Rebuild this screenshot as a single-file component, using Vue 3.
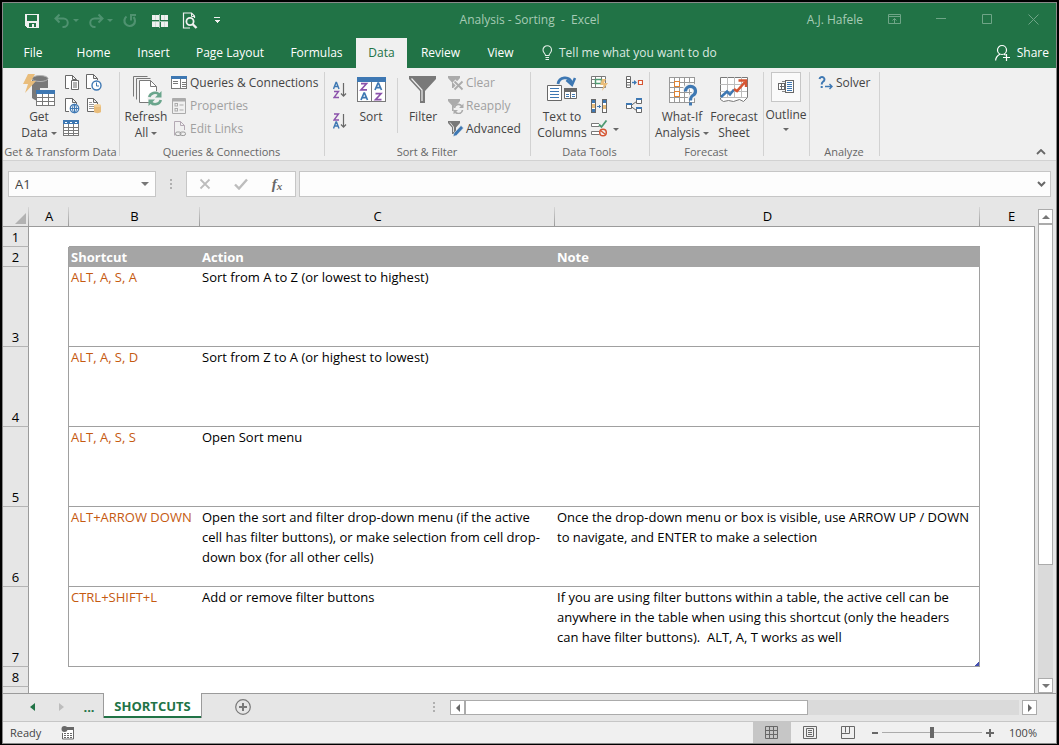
<script setup>
import { ref } from 'vue'

const tabs = [
  { label: 'File', cls: 'w60' },
  { label: 'Home', cls: 'w61' },
  { label: 'Insert', cls: 'w59' },
  { label: 'Page Layout', cls: 'w94' },
  { label: 'Formulas', cls: 'w79' },
  { label: 'Data', cls: 'w51' },
  { label: 'Review', cls: 'w67' },
  { label: 'View', cls: 'w53' },
]
const activeTab = ref('Data')
const cellName = ref('A1')
const formula = ref('')
const zoom = ref(50)

const rows = [
  { n: 3, keys: 'ALT, A, S, A', action: 'Sort from A to Z (or lowest to highest)', note: '' },
  { n: 4, keys: 'ALT, A, S, D', action: 'Sort from Z to A (or highest to lowest)', note: '' },
  { n: 5, keys: 'ALT, A, S, S', action: 'Open Sort menu', note: '' },
  {
    n: 6,
    keys: 'ALT+ARROW DOWN',
    action: 'Open the sort and filter drop-down menu (if the active\ncell has filter buttons), or make selection from cell drop-\ndown box (for all other cells)',
    note: 'Once the drop-down menu or box is visible, use ARROW UP / DOWN\nto navigate, and ENTER to make a selection',
  },
  {
    n: 7,
    keys: 'CTRL+SHIFT+L',
    action: 'Add or remove filter buttons',
    note: 'If you are using filter buttons within a table, the active cell can be\nanywhere in the table when using this shortcut (only the headers\ncan have filter buttons).  ALT, A, T works as well',
  },
]
</script>

<template>
  <div class="frame">
    <div class="window">
      <header class="top">
        <div class="titlebar">
          <div class="quick">
            <button aria-label="Save" class="q-save">
              <svg width="16" height="16" viewBox="0 0 16 16" shape-rendering="crispEdges"><path d="M1 1h14v14H3l-2-2z" fill="#f0f0f0" /><path d="M3 2h10v6H3zM5 10h7v4h-2v-3H8v3H5z" fill="#217346" /></svg>
            </button>
            <button aria-label="Undo" class="q-undo dim">
              <svg width="16" height="16" viewBox="0 0 16 16"><path d="M5.500 1.500L1.500 5.500l4 4M2 5.500h7.500a4 4 0 0 1 0 8.500H8.500" fill="none" stroke="currentColor" stroke-width="2" /></svg>
            </button>
            <button aria-label="Undo list" class="q-caret dim"><svg width="7" height="4"><path d="M0 0h6L3 3z" fill="currentColor" /></svg></button>
            <button aria-label="Redo" class="q-redo dim">
              <svg width="16" height="16" viewBox="0 0 16 16"><path d="M10.500 1.500l4 4-4 4M14 5.500H6.500a4 4 0 0 0 0 8.500H7.500" fill="none" stroke="currentColor" stroke-width="2" /></svg>
            </button>
            <button aria-label="Redo list" class="q-caret dim"><svg width="7" height="4"><path d="M0 0h6L3 3z" fill="currentColor" /></svg></button>
            <button aria-label="Repeat" class="q-repeat dim">
              <svg width="16" height="16" viewBox="0 0 16 16"><path d="M4.500 3.500A5.300 5.300 0 1 0 11.500 4" fill="none" stroke="currentColor" stroke-width="2.200" /><path d="M14 2H9v5.500" fill="none" stroke="currentColor" stroke-width="2" /></svg>
            </button>
            <button aria-label="Freeze panes" class="q-freeze">
              <svg width="16" height="14" viewBox="0 0 16 14" shape-rendering="crispEdges"><path d="M0 1h7v5H0zM9 1h7v5H9zM0 8h7v5H0zM9 8h7v5H9z" fill="#f0f0f0" /><path d="M7.500 0v14M0 7h16" stroke="#9fc4af" /><path d="M3 1v5M12 1v5M3 8v5M12 8v5" stroke="#cfe0d6" /></svg>
            </button>
            <button aria-label="Print preview" class="q-preview">
              <svg width="16" height="17" viewBox="0 0 16 17"><path d="M12.500 6V4l-3-3H1.500v15H8" fill="none" stroke="#f0f0f0" stroke-width="1.200" /><path d="M9.500 1v3.500H13" fill="none" stroke="#f0f0f0" /><circle cx="8" cy="9.500" r="3.600" fill="none" stroke="#f0f0f0" stroke-width="1.800" /><path d="M10.500 12l4 4" stroke="#f0f0f0" stroke-width="2.400" /></svg>
            </button>
            <button aria-label="Customize toolbar" class="q-more"><svg width="6" height="7" shape-rendering="crispEdges"><path d="M0 0h6v1H0zM0 3h6L3 6z" fill="#f0f0f0" /></svg></button>
          </div>
          <h1 class="title">Analysis - Sorting&nbsp; -&nbsp; Excel</h1>
          <div class="account">
            <span class="user">A.J. Hafele</span>
            <button aria-label="Ribbon display options" class="win"><svg width="14" height="11"><path d="M.5.500h12v9H.5zM.5 2.500h12M6.500 9V4.500M4.500 6.500l2-2 2 2" fill="none" stroke="currentColor" /></svg></button>
            <button aria-label="Minimize" class="win"><svg width="11" height="11"><path d="M0 4.500h10" stroke="currentColor" /></svg></button>
            <button aria-label="Maximize" class="win"><svg width="11" height="11"><path d="M.5.500h9v9h-9z" fill="none" stroke="currentColor" /></svg></button>
            <button aria-label="Close" class="win"><svg width="11" height="11"><path d="M.5.500l10 10M10.500.500l-10 10" stroke="currentColor" /></svg></button>
          </div>
        </div>
        <nav class="tabs">
          <button v-for="t in tabs" :key="t.label" :class="['tab', t.cls, { active: activeTab === t.label }]" @click="activeTab = t.label">{{ t.label }}</button>
          <button class="tell">
            <svg width="11" height="16" viewBox="0 0 11 16"><path d="M3.500 10.500C3.500 8.500 1 7.800 1 5a4.200 4.200 0 0 1 8.500 0c0 2.800-2.500 3.500-2.500 5.500zM3.500 12.500h3.500M3.500 14.500h3.500" fill="none" stroke="#e4efe8" stroke-width="1.100" /></svg>
            Tell me what you want to do
          </button>
          <button class="share">
            <svg width="16" height="18" viewBox="0 0 16 18"><circle cx="7" cy="6" r="4.500" fill="none" stroke="#fff" stroke-width="1.200" /><path d="M.600 16.500c.2-3.500 2-5 4.400-6.200M9 10l1.500 1.200M8 13.500h7M11.500 10v7" fill="none" stroke="#fff" stroke-width="1.200" /></svg>
            Share
          </button>
        </nav>
      </header>

      <section class="ribbon">
        <div class="group g-get">
          <div class="body">
            <button class="big b-get">
              <svg width="32" height="32" viewBox="0 0 32 32"><path d="M9 4v20c2 2 5 3 8 3V14h8V4z" fill="#797979" /><ellipse cx="17" cy="4.500" rx="8" ry="3" fill="#797979" stroke="#b5b5b5" /><path d="M5 0h7L8 7h5L2 19l3-9H0z" fill="#e9bd7b" /><g shape-rendering="crispEdges"><path d="M13 16h19v16H13z" fill="#f0f0f0" /><path d="M13.500 17h18v14h-18zM13 23.500h19M13 27.500h19M19.500 20v12M25.500 20v12" fill="#fff" stroke="#797979" /><path d="M13 16h19v4H13z" fill="#3e78b3" /></g></svg>
              <span>Get</span><span>Data <i class="caret"></i></span>
            </button>
            <div class="small-grid">
              <button aria-label="From text or CSV"><svg width="18" height="18" viewBox="0 0 18 18"><path d="M6 14.500H2.500v-13h7l4 4V6M9.500 1.500v4h4" fill="#fff" stroke="#686868" /><path d="M8.500 6.500h7v9h-7zM10 9h4M10 11h4M10 13h4" fill="#fff" stroke="#686868" /></svg></button>
              <button aria-label="Recent sources"><svg width="18" height="18" viewBox="0 0 18 18"><path d="M6 14.500H1.500V.500h7l4 4V6M8.500.500v4h4" fill="#fff" stroke="#686868" /><circle cx="11.500" cy="11.500" r="4.500" fill="#fff" stroke="#3e78b3" stroke-width="1.400" /><path d="M11.500 8.500v3.500H14" fill="none" stroke="#3e78b3" /></svg></button>
              <button aria-label="From web"><svg width="18" height="18" viewBox="0 0 18 18"><path d="M6 14.500H2.500v-13h7l4 4V7M9.500 1.500v4h4" fill="#fff" stroke="#686868" /><circle cx="11.500" cy="11.500" r="4.200" fill="#fff" stroke="#3e78b3" stroke-width="1.300" /><path d="M7 11.500h9M11.500 7v9" stroke="#3e78b3" /><ellipse cx="11.500" cy="11.500" rx="2" ry="4.200" fill="none" stroke="#3e78b3" /></svg></button>
              <button aria-label="Existing connections"><svg width="18" height="18" viewBox="0 0 18 18"><path d="M9 14.500H2.500v-13h6l4 4V7M8.500 1.500v4h4" fill="#fff" stroke="#686868" /><path d="M4 5.500h3M4 7.500h5M4 9.500h5M4 11.500h5" stroke="#999" /><path d="M9 8.500v6.500c1.500 1.500 5.500 1.500 7 0V8.500z" fill="#e9bd7b" /><ellipse cx="12.500" cy="8.500" rx="3.500" ry="1.500" fill="#f1cf98" /></svg></button>
              <button aria-label="From table or range"><svg width="18" height="18" viewBox="0 0 18 18" shape-rendering="crispEdges"><path d="M.5 1.500h15v14H.5zM0 7.500h16M0 10.500h16M0 13.500h16M5.500 4v12M10.500 4v12" fill="#fff" stroke="#797979" /><path d="M0 0h16v4H0z" fill="#3e78b3" /><path d="M2 2h2M7 2h2M12 2h2" stroke="#fff" /></svg></button>
            </div>
          </div>
          <h2>Get &amp; Transform Data</h2>
        </div>

        <div class="group g-queries">
          <div class="body">
            <button class="big b-refresh">
              <svg width="32" height="32" viewBox="0 0 32 32"><path d="M3.500 22.500V2.500h14" fill="none" stroke="#797979" /><path d="M6.500 25.500V4.500h14" fill="none" stroke="#797979" /><path d="M9.500 28.500v-22h11l6 6v16z" fill="#fff" stroke="#797979" /><path d="M20.500 6.500v6h6" fill="none" stroke="#797979" /><circle cx="25" cy="24.500" r="7.500" fill="#f0f0f0" /><path d="M19.200 23a6 6 0 0 1 10-2.500M30.800 26a6 6 0 0 1-10 2.500" fill="none" stroke="#6aa58c" stroke-width="2.600" /><path d="M31.500 17v6.500H25zM18.500 32v-6.500H25z" fill="#6aa58c" /></svg>
              <span>Refresh</span><span>All <i class="caret"></i></span>
            </button>
            <div class="list">
              <button><svg width="16" height="16" viewBox="0 0 16 16" shape-rendering="crispEdges"><path d="M.5 1.500h15v12H.5z" fill="#fff" stroke="#797979" /><path d="M0 1h16v3H0z" fill="#3e78b3" /><path d="M2 6.500h5M2 8.500h5M9.500 4v10M11 7.500h4M11 9.500h4M11 11.500h4" stroke="#797979" /></svg>Queries &amp; Connections</button>
              <button disabled><svg width="16" height="16" viewBox="0 0 16 16"><path d="M1.500.500h13v15h-13zM1.500 3h13" fill="none" stroke="#ababab" /><path d="M2 2h12" stroke="#ababab" stroke-width="2" /><rect x="4" y="5.500" width="2.500" height="2.500" fill="none" stroke="#ababab" /><rect x="4" y="10.500" width="2.500" height="2.500" fill="none" stroke="#ababab" /><path d="M8.500 7h4M8.500 12h4" stroke="#ababab" /></svg>Properties</button>
              <button disabled><svg width="16" height="16" viewBox="0 0 16 16"><path d="M4 14.500v-.500H3.500V.500h6l4 4V9M9.500.500v4h4" fill="none" stroke="#b4a9b4" /><rect x="4.500" y="11" width="5.500" height="3.500" rx="1.700" fill="none" stroke="#999" /><rect x="9" y="11" width="5.500" height="3.500" rx="1.700" fill="none" stroke="#999" /></svg>Edit Links</button>
            </div>
          </div>
          <h2>Queries &amp; Connections</h2>
        </div>

        <div class="group g-sort">
          <div class="body">
            <div class="az-col">
              <button aria-label="Sort A to Z"><svg width="14" height="18" viewBox="0 0 14 18"><path d="M.5 8L3 1.500h.500L6 8M1.500 5.500h3.500" fill="none" stroke="#3e78b3" stroke-width="1.400" /><path d="M1 10.500h4.500L1 16.500h5" fill="none" stroke="#8b52ab" stroke-width="1.400" /><path d="M10.500 2v13M8 12.500l2.500 2.700L13 12.500" fill="none" stroke="#686868" stroke-width="1.200" /></svg></button>
              <button aria-label="Sort Z to A"><svg width="14" height="18" viewBox="0 0 14 18"><path d="M1 2h4.500L1 8h5" fill="none" stroke="#8b52ab" stroke-width="1.400" /><path d="M.5 16.500L3 10h.500L6 16.500M1.500 14h3.500" fill="none" stroke="#3e78b3" stroke-width="1.400" /><path d="M10.500 2v13M8 12.500l2.500 2.700L13 12.500" fill="none" stroke="#686868" stroke-width="1.200" /></svg></button>
            </div>
            <button class="big b-sort">
              <svg width="32" height="32" viewBox="0 0 32 32"><g shape-rendering="crispEdges"><path d="M2.500 3.500h28v24h-28z" fill="#fff" stroke="#797979" /><path d="M2 3h29v5H2z" fill="#3e78b3" /><path d="M16.500 8v20" stroke="#797979" /></g><path d="M6 9.700h5.500L6 15.800h6M20.500 19.700H26l-5.500 6h6" fill="none" stroke="#8b52ab" stroke-width="1.700" /><path d="M6 26l3-7h.500l3 7M7 23.700h4.500M20 16l3-7h.500l3 7M21 13.700h4.500" fill="none" stroke="#3e78b3" stroke-width="1.700" /></svg>
              <span>Sort</span>
            </button>
            <i class="divider"></i>
            <button class="big b-filter">
              <svg width="32" height="32" viewBox="0 0 32 32"><path d="M2 2h27v3L18 17v12h-5V17L2 5z" fill="#797979" /><path d="M4.500 4.500L15 16v11" fill="none" stroke="#eee" stroke-width="1.200" /></svg>
              <span>Filter</span>
            </button>
            <div class="list l-filter">
              <button disabled><svg width="16" height="16" viewBox="0 0 16 16"><path d="M0 1h12v2L8 7.500V13H4V7.500L0 3z" fill="#ababab" /><path d="M6 6l9 9M15 6l-9 9" stroke="#f0f0f0" stroke-width="4" /><path d="M6.500 6.500l8 8M14.500 6.500l-8 8" stroke="#ababab" stroke-width="1.800" /></svg>Clear</button>
              <button disabled><svg width="16" height="16" viewBox="0 0 16 16"><path d="M0 1h12v2L8 7.500V13H4V7.500L0 3z" fill="#ababab" /><circle cx="10.500" cy="11" r="5" fill="#f0f0f0" /><path d="M6.500 10a4 4 0 0 1 7.500-1.500M14.500 12a4 4 0 0 1-7.500 1.500" fill="none" stroke="#ababab" stroke-width="1.600" /><path d="M15.500 5.500v4.500H11zM5.500 16.500V12H10z" fill="#ababab" /></svg>Reapply</button>
              <button><svg width="16" height="16" viewBox="0 0 16 16"><path d="M0 0h12v2L8 6.500V13H4V6.500L0 2z" fill="#797979" /><path d="M2 1.500l3.500 4.500v5" fill="none" stroke="#ddd" /><path d="M5 15.500l1-3.500 7-7.500 2.500 2.500-7 7.500z" fill="#3e78b3" stroke="#f0f0f0" stroke-width=".6" /></svg>Advanced</button>
            </div>
          </div>
          <h2>Sort &amp; Filter</h2>
        </div>

        <div class="group g-tools">
          <div class="body">
            <button class="big b-text">
              <svg width="32" height="32" viewBox="0 0 32 32"><path d="M12 10c1-7 11-9 14-1" fill="none" stroke="#3e78b3" stroke-width="2.800" /><path d="M20.500 6l5.500 5 3-7" fill="none" stroke="#3e78b3" stroke-width="2.500" /><path d="M1.500 11.500h14v15h-14z" fill="#fff" stroke="#686868" /><path d="M4 14.500h9M4 17.500h9M4 20.500h9M4 23.500h9" stroke="#3e78b3" shape-rendering="crispEdges" /><path d="M18.500 15.500h12v9h-12zM24.500 18v7" fill="#fff" stroke="#686868" /><path d="M18 14h13v4H18z" fill="#686868" /><path d="M20 20.500h3M20 22.500h3M26 20.500h3M26 22.500h3" stroke="#3e78b3" /></svg>
              <span>Text to</span><span>Columns</span>
            </button>
            <div class="tool-grid">
              <button aria-label="Flash Fill"><svg width="17" height="18" viewBox="0 0 17 18"><path d="M.5 2.500h14v11H.5zM0 5.500h15M0 9.500h10M4.500 2v11M10.500 2v4" fill="#fff" stroke="#797979" /><path d="M4.500 5.500h6v4h-6z" fill="#fff" stroke="#4f9a72" stroke-width="1.500" /><path d="M11 5h4l-2 4h4l-6 8 1.500-6H9z" fill="#e9bd7b" /></svg></button>
              <button aria-label="Consolidate"><svg width="17" height="18" viewBox="0 0 17 18"><path d="M.5 2.500h4v11h-4zM.5 5.500h4M.5 8.500h4M.5 11h4" fill="#fff" stroke="#686868" /><path d="M6 8.500h4" stroke="#3e78b3" stroke-width="1.400" /><path d="M8 6l3 2.500L8 11z" fill="#3e78b3" /><path d="M12.500 6.500h4v4h-4z" fill="#fff" stroke="#d65532" stroke-width="1.200" /></svg></button>
              <button aria-label="Remove Duplicates"><svg width="17" height="18" viewBox="0 0 17 18" shape-rendering="crispEdges"><path d="M.5 2.500h4v13h-4zM11.500 2.500h4v13h-4z" fill="#fff" stroke="#686868" /><path d="M1 3h3v3H1zM12 3h3v3h-3z" fill="#3e78b3" /><path d="M1 7h3v4H1zM12 8h3v4h-3z" fill="#e9bd7b" /><path d="M1 12h3v3H1z" fill="#3e78b3" /><path d="M6 9h4M8.500 7.500v3" stroke="#3e78b3" /></svg></button>
              <button aria-label="Relationships"><svg width="17" height="18" viewBox="0 0 17 18"><path d="M5 8.500l5.500-4M5 9.500l5.500 4" stroke="#686868" /><path d="M.5 6.500h5v5h-5zM10.500 1.500h5v5h-5zM10.500 10.500h5v5h-5z" fill="#fff" stroke="#686868" /><path d="M0 6h6v2H0zM10 1h6v2h-6zM10 10h6v2h-6z" fill="#3e78b3" /></svg></button>
              <button aria-label="Data Validation"><svg width="17" height="18" viewBox="0 0 17 18"><path d="M8 3.500H.5v3h8M8 11.500H.5v3h8" fill="#fff" stroke="#797979" /><path d="M8 4.500l2.500 2.500 5-6.500" fill="none" stroke="#4f9a72" stroke-width="1.800" /><circle cx="12" cy="12.500" r="3.300" fill="#f0f0f0" stroke="#d65532" stroke-width="1.500" /><path d="M9.500 10.500l5 4" stroke="#d65532" stroke-width="1.300" /></svg></button>
              <button aria-label="Data Validation options" class="val-caret"><i class="caret"></i></button>
            </div>
          </div>
          <h2>Data Tools</h2>
        </div>

        <div class="group g-forecast">
          <div class="body">
            <button class="big b-what">
              <svg width="32" height="32" viewBox="0 0 32 32"><g shape-rendering="crispEdges"><path d="M3.500 3.500h25v25h-25z" fill="#fff" /><path d="M3.500 3.500h25v25h-25zM8.500 3v26M13.500 3v26M18.500 3v26M23.500 3v26M3 8.500h26M3 13.500h26M3 18.500h26M3 23.500h26" fill="none" stroke="#999" /><path d="M8.500 7.500h5v5h-5zM8.500 17.500h5v5h-5z" fill="#fff" stroke="#df8334" /></g><path d="M19.500 17a5 5 0 1 1 8 4c-2 1.300-3 2-3 5" fill="none" stroke="#f0f0f0" stroke-width="6" /><path d="M19.500 17.500a5 4.800 0 1 1 8 3.500c-2 1.300-3 2-3 5.500" fill="none" stroke="#3e78b3" stroke-width="3.200" /><path d="M23 28.500h3v3h-3z" fill="#3e78b3" /></svg>
              <span>What-If</span><span>Analysis <i class="caret"></i></span>
            </button>
            <button class="big b-fore">
              <svg width="32" height="32" viewBox="0 0 32 32"><path d="M2.500 3.500h27v20l-4 4-4-2-6 2-5-1-5 1-3-2z" fill="#fff" stroke="#797979" /><path d="M9.500 3v21M16.500 3v21M23.500 3v21M2 10.500h27M2 17.500h27M2 23.500h27" stroke="#bcbcbc" /><path d="M3 23l6-5.500 3 3 4-5" fill="none" stroke="#3e78b3" stroke-width="2.500" /><path d="M16 15l3 2 8-9" fill="none" stroke="#d65532" stroke-width="2.500" /><path d="M20.500 6.500H28V13" fill="none" stroke="#d65532" stroke-width="2.400" /></svg>
              <span>Forecast</span><span>Sheet</span>
            </button>
          </div>
          <h2>Forecast</h2>
        </div>

        <div class="group g-outline">
          <button class="outline">
            <b><svg width="18" height="16" viewBox="0 0 18 16" shape-rendering="crispEdges"><path d="M8.500 1.500h8v12h-8zM1.500 4.500h6v6h-6zM4.500 5v5M3 7.500h4" fill="#fff" stroke="#686868" /><path d="M10 3.500h5M10 5.500h5M10 7.500h5M10 9.500h5M10 11.500h5" stroke="#3e78b3" /><path d="M4.500 2.500H8M4.500 12.500H8" stroke="#888" /></svg></b>
            <span>Outline</span>
            <i class="caret"></i>
          </button>
        </div>

        <div class="group g-analyze">
          <div class="body">
            <div class="list l-solver">
              <button><svg width="16" height="16" viewBox="0 0 16 16"><path d="M1.500 4a2.500 2.500 0 1 1 3.500 2.700C4 7.500 3.700 8 3.700 9.500M3.700 11v2" fill="none" stroke="#3e78b3" stroke-width="2" /><path d="M7 11.500h7M11.500 9l2.500 2.500-2.500 2.500" fill="none" stroke="#3e78b3" stroke-width="1.400" /></svg>Solver</button>
            </div>
          </div>
          <h2>Analyze</h2>
        </div>
        <button aria-label="Collapse the ribbon" class="collapse"><svg width="10" height="6"><path d="M1 5l4-4 4 4" fill="none" stroke="#686868" stroke-width="1.800" /></svg></button>
      </section>

      <section class="formula-row">
        <div class="name-box">
          <input v-model="cellName" aria-label="Name box" />
          <button aria-label="Name list"><svg width="8" height="5"><path d="M0 0h8L4 4z" fill="#777" /></svg></button>
        </div>
        <i class="dots"></i>
        <div class="fx">
          <button aria-label="Cancel"><svg width="12" height="12"><path d="M1.500 1.500l9 9M10.500 1.500l-9 9" stroke="#bdbdbd" stroke-width="1.800" /></svg></button>
          <button aria-label="Enter"><svg width="14" height="12"><path d="M1 6.500l4 4 8-9" fill="none" stroke="#bdbdbd" stroke-width="2.400" /></svg></button>
          <button aria-label="Insert function" class="fx-label">f<small>x</small></button>
        </div>
        <div class="formula">
          <input v-model="formula" aria-label="Formula bar" />
          <button aria-label="Expand formula bar"><svg width="10" height="6"><path d="M1 1l3.500 3.500L8 1" fill="none" stroke="#686868" stroke-width="2" /></svg></button>
        </div>
      </section>

      <main class="workspace">
        <div class="sheet">
          <table>
            <colgroup><col class="c-head" /><col class="c-a" /><col class="c-b" /><col class="c-c" /><col class="c-d" /><col /></colgroup>
            <thead>
              <tr>
                <th class="corner" aria-label="Select all"><svg width="11" height="11"><path d="M11 0v11H0z" fill="#b2b2b2" /></svg></th>
                <th>A</th><th>B</th><th>C</th><th>D</th><th class="last">E</th>
              </tr>
            </thead>
            <tbody>
              <tr class="r20"><th>1</th><td></td><td class="line"></td><td class="line"></td><td class="line"></td><td class="end"></td></tr>
              <tr class="r20 head"><th>2</th><td class="edge"></td><td class="fill">Shortcut</td><td class="fill">Action</td><td class="fill">Note</td><td class="end"></td></tr>
              <tr v-for="r in rows" :key="r.n" class="r80">
                <th>{{ r.n }}</th>
                <td class="edge"></td>
                <td class="line keys">{{ r.keys }}</td>
                <td class="line">{{ r.action }}</td>
                <td class="line side">{{ r.note }}<i v-if="r.n === 7" class="handle"></i></td>
                <td class="end"></td>
              </tr>
              <tr class="r20"><th>8</th><td></td><td></td><td></td><td></td><td class="end"></td></tr>
              <tr class="rest"><th></th><td></td><td></td><td></td><td></td><td class="end"></td></tr>
            </tbody>
          </table>
        </div>
        <div class="vscroll">
          <button aria-label="Scroll up"><svg width="8" height="4"><path d="M0 4h8L4 0z" fill="#777" /></svg></button>
          <div class="vtrack"><div class="vthumb"></div></div>
          <button aria-label="Scroll down"><svg width="8" height="4"><path d="M0 0h8L4 4z" fill="#777" /></svg></button>
        </div>
      </main>

      <section class="sheetbar">
        <button aria-label="Previous sheet" class="nav1"><svg width="5" height="8"><path d="M5 0v8L0 4z" fill="#217346" /></svg></button>
        <button aria-label="Next sheet" class="nav2"><svg width="5" height="8"><path d="M0 0v8l5-4z" fill="#bdbdbd" /></svg></button>
        <button aria-label="More sheets" class="more">...</button>
        <button class="sheet-tab">SHORTCUTS</button>
        <button aria-label="New sheet" class="add"><svg width="16" height="16"><circle cx="8" cy="8" r="7.300" fill="none" stroke="#797979" stroke-width="1.200" /><path d="M4 8h8M8 4v8" stroke="#797979" stroke-width="2" /></svg></button>
        <i class="dots"></i>
        <div class="hscroll">
          <button aria-label="Scroll left"><svg width="4" height="8"><path d="M4 0v8L0 4z" fill="#686868" /></svg></button>
          <div class="htrack"><div class="hthumb"></div></div>
          <button aria-label="Scroll right" class="right"><svg width="4" height="8"><path d="M0 0v8l4-4z" fill="#686868" /></svg></button>
        </div>
      </section>

      <footer class="status">
        <span class="ready">Ready</span>
        <button aria-label="Record macro" class="macro"><svg width="14" height="14" viewBox="0 0 14 14"><path d="M1.500 7v6h11V2.500H7" fill="#fff" stroke="#686868" /><path d="M6 1h7v3H6z" fill="#686868" /><circle cx="3.500" cy="3" r="3" fill="#686868" /><path d="M3 7.500h8M3 9.500h8M3 11.500h8" stroke="#686868" stroke-dasharray="2 1" /></svg></button>
        <div class="views">
          <button aria-label="Normal view" class="on"><svg width="14" height="14"><path d="M.5.500h12v12H.5zM4.500 0v13M8.500 0v13M0 4.500h13M0 8.500h13" fill="none" stroke="#686868" /></svg></button>
          <button aria-label="Page layout view"><svg width="14" height="14"><path d="M.5.500h13v12H.5zM3.500 2.500h7v8h-7zM5 4.500h4M5 6.500h4M5 8.500h4" fill="none" stroke="#686868" /></svg></button>
          <button aria-label="Page break view"><svg width="14" height="14"><path d="M.5.500h13v12H.5zM4.500 0v6.500M0 7.500h8.500V0" fill="none" stroke="#686868" /></svg></button>
        </div>
        <button aria-label="Zoom out" class="zoom-btn"><svg width="8" height="8"><path d="M1 4h6" stroke="#686868" stroke-width="2" /></svg></button>
        <input v-model="zoom" type="range" min="0" max="100" aria-label="Zoom" />
        <button aria-label="Zoom in" class="zoom-btn"><svg width="8" height="8"><path d="M0 4h8M4 0v8" stroke="#686868" stroke-width="2" /></svg></button>
        <span class="pct">100%</span>
      </footer>
    </div>
  </div>
</template>

<style>
html, body { margin: 0; background: #000; }
</style>

<style scoped>
* { box-sizing: border-box; }
button { display: flex; align-items: center; justify-content: center; padding: 0; border: 0; background: none; color: inherit; font: inherit; white-space: nowrap; }
input { min-width: 0; margin: 0; border: 0; outline: 0; background: none; font: inherit; color: inherit; }
svg { display: block; flex: none; }
i { font-style: normal; }
.frame { display: flex; min-height: 100vh; padding: 2px 2px 1px; background: #000; font: 12px/16px "Open Sans", "Noto Sans", sans-serif; color: #444; }
.window { display: flex; flex: 1; flex-direction: column; min-width: 0; border: 1px solid #8a8a8a; background: #e6e6e6; }

.top { background: #217346; color: #fff; }
.titlebar { display: grid; grid-template-columns: 1fr auto 1fr; height: 35px; align-items: center; }
.quick { display: flex; align-items: center; }
.quick button { width: 16px; height: 20px; }
.quick .dim { color: #4f9270; }
.quick .q-save { margin-left: 21px; }
.quick .q-undo { margin-left: 14px; }
.quick .q-caret { width: 7px; margin-left: 3px; }
.quick .q-redo { margin-left: 8px; }
.quick .q-repeat { margin-left: 8px; }
.quick .q-freeze { margin-left: 14px; }
.quick .q-preview { margin-left: 14px; }
.quick .q-more { margin-left: 11px; }
.title { margin: 0; font-size: 12px; font-weight: 400; line-height: 16px; padding-bottom: 2px; color: #a6cbb5; }
.account { display: flex; justify-content: flex-end; align-items: center; color: #a6cbb5; }
.user { margin-right: 9px; padding-bottom: 2px; }
.win { width: 46px; height: 32px; padding-bottom: 2px; color: #6fa587; }

.tabs { display: flex; height: 30px; }
.tab { flex: none; }
.tab.active { background: #f0f0f0; color: #217346; }
.w60 { width: 60px; } .w61 { width: 61px; } .w59 { width: 59px; } .w94 { width: 94px; }
.w79 { width: 79px; } .w51 { width: 51px; } .w67 { width: 67px; } .w53 { width: 53px; }
.tell { gap: 6px; margin-left: 15px; color: #dbe9e0; }
.share { gap: 6px; margin-left: auto; padding-right: 7px; }

.ribbon { display: flex; height: 93px; border-bottom: 1px solid #d2d2d2; background: #f0f0f0; }
.group { display: flex; flex: none; flex-direction: column; height: 84px; margin-top: 4px; padding-right: 1px; border-right: 1px solid #d2d2d2; }
.group h2 { flex: none; margin: 0; font-size: 11px; font-weight: 400; line-height: 16px; text-align: center; white-space: nowrap; color: #666; }
.body { display: flex; flex: none; height: 72px; }
.g-get { width: 117px; } .g-queries { width: 205px; } .g-sort { width: 206px; } .g-tools { width: 119px; }
.g-forecast { width: 114px; } .g-outline { width: 46px; } .g-analyze { width: 70px; }
.big { flex: none; flex-direction: column; justify-content: flex-start; padding-top: 2px; }
.big svg { margin-bottom: 3px; }
.big span { display: flex; align-items: center; gap: 3px; }
.caret { width: 0; border: 3px solid transparent; border-top-color: #686868; border-bottom: 0; }
.b-get { width: 44px; margin-left: 14px; }
.small-grid { display: grid; grid-template-columns: 22px 18px; grid-auto-rows: 23px; justify-items: start; margin-left: 2px; }
.small-grid button { height: 22px; }
.b-refresh { width: 46px; margin-left: 3px; }
.list { display: flex; flex-direction: column; margin-left: 2px; }
.list button { justify-content: flex-start; gap: 3px; height: 23px; padding-bottom: 2px; }
.list button:disabled { color: #a0a0a0; }
.az-col { display: flex; flex-direction: column; gap: 13px; padding-top: 9px; margin-left: 8px; }
.b-sort { width: 40px; margin-left: 4px; }
.divider { width: 1px; height: 55px; margin: 6px 6px 0; background: #d2d2d2; }
.b-filter { width: 38px; }
.l-filter { margin-left: 6px; }
.l-filter button { gap: 2px; }
.b-text { width: 54px; margin-left: 4px; }
.tool-grid { display: grid; grid-template-columns: 35px 17px; grid-auto-rows: 23px; justify-items: start; margin-left: 2px; }
.tool-grid button { height: 22px; }
.tool-grid .val-caret { width: 6px; margin-left: -13px; }
.b-what { width: 54px; margin-left: 5px; }
.b-fore { width: 50px; }
.outline { flex-direction: column; justify-content: flex-start; }
.outline b { display: flex; align-items: center; justify-content: center; width: 30px; height: 30px; margin-bottom: 5px; border: 1px solid #c6c6c6; background: #fafafa; }
.outline .caret { margin-top: 5px; }
.l-solver { margin-left: 8px; }
.l-solver button { gap: 2px; }
.collapse { align-self: flex-end; height: 16px; margin: 0 10px 0 auto; }

.formula-row { display: flex; flex: none; height: 46px; padding: 10px 5px; }
.name-box, .fx, .formula { display: flex; height: 26px; border: 1px solid #c6c6c6; background: #fdfdfd; }
.name-box { width: 148px; font-size: 13px; }
.name-box input { flex: 1; padding: 0 6px; }
.name-box button { width: 20px; }
.dots { flex: none; width: 2px; height: 11px; background: repeating-linear-gradient(#b0b0b0 0 2px, transparent 2px 4px); }
.formula-row .dots { margin: 8px 14px 0; }
.fx { width: 110px; margin-right: 3px; }
.fx button { flex: 1; }
.fx .fx-label { font: italic 700 15px/20px "Liberation Serif", serif; color: #686868; }
.fx small { font-size: 11px; padding-top: 3px; }
.formula { flex: 1; }
.formula input { flex: 1; padding: 0 6px; }
.formula button { width: 16px; }

.workspace { display: flex; flex: 1; }
.sheet { display: flex; flex: 1; min-width: 0; background: #fff; }
table { width: 100%; height: 100%; table-layout: fixed; border-collapse: separate; border-spacing: 0; font: 13px/20px "Open Sans", "Noto Sans", sans-serif; color: #000; }
.c-head { width: 26px; } .c-a { width: 40px; } .c-b { width: 131px; } .c-c { width: 355px; } .c-d { width: 425px; }
th { padding: 0; font-weight: 400; background: #e6e6e6; }
thead th { height: 20px; border-bottom: 1px solid #9b9b9b; line-height: 19px; background: linear-gradient(#d6d6d6, #9b9b9b) right / 1px 100% no-repeat #e6e6e6; }
thead .last { background: #e6e6e6; padding-left: 8px; }
.corner svg { margin: 3px 3px 0 auto; }
tbody th { vertical-align: bottom; line-height: 18px; border-right: 1px solid #9b9b9b; border-bottom: 1px solid #b4b4b4; }
td { padding: 0 2px; vertical-align: top; white-space: pre; }
.r20 { height: 20px; }
.r80 { height: 80px; }
.line { border-bottom: 1px solid #a0a0a0; }
.edge { border-right: 1px solid #a0a0a0; }
.fill { background: #a5a5a5; color: #fff; font-weight: 700; }
.side { position: relative; border-right: 1px solid #a0a0a0; }
.handle { position: absolute; right: 0; bottom: 0; width: 4px; height: 4px; background: linear-gradient(135deg, transparent 40%, #4450b0 40%); }
.keys { color: #c55a11; }
.end { border-right: 1px solid #9b9b9b; }
.rest th { border-bottom: 0; }

.vscroll { display: flex; flex-direction: column; width: 15px; margin: 2px 3px 0; }
.vscroll button, .hscroll button { flex: none; width: 15px; height: 15px; border: 1px solid #ababab; background: #fff; }
.vtrack { flex: 1; background: #dadada; }
.vthumb { height: 75%; border: 1px solid #ababab; background: #fff; }

.sheetbar { display: flex; flex: none; height: 29px; border-top: 1px solid #9b9b9b; border-bottom: 1px solid #c6c6c6; }
.sheetbar > button { flex: none; height: 26px; }
.nav1 { width: 14px; margin-left: 22px; }
.nav2 { width: 14px; margin-left: 15px; }
.sheetbar .more { width: 28px; margin-left: 7px; font-weight: 700; font-size: 13px; color: #217346; }
.sheetbar .sheet-tab { width: 99px; height: 25px; margin-top: -1px; border: solid #9b9b9b; border-width: 0 1px; box-shadow: inset 0 -2px #217346; background: #fff; color: #217346; font-size: 13px; font-weight: 700; }
.add { width: 16px; margin-left: 33px; }
.sheetbar .dots { margin: 8px 15px 0 182px; }
.hscroll { display: flex; flex: 1; height: 15px; margin: 6px 19px 0 0; }
.htrack { flex: 1; background: #dadada; margin-right: 3px; }
.hthumb { width: 62%; height: 15px; border: 1px solid #ababab; background: #fff; }

.status { display: flex; flex: none; align-items: center; height: 21px; padding-right: 19px; background: #f0f0f0; }
.ready { margin-left: 7px; }
.ready, .pct { font-size: 11px; }
.macro { margin-left: 20px; }
.views { display: flex; margin-left: auto; }
.views button { width: 38px; height: 21px; }
.views .on { background: #c6c6c6; }
.zoom-btn { width: 15px; height: 20px; }
input[type="range"] { width: 100px; height: 20px; appearance: none; background: linear-gradient(#ababab, #ababab) center / 100% 1px no-repeat; }
input[type="range"]::-webkit-slider-thumb { appearance: none; width: 4px; height: 11px; background: #686868; }
.pct { width: 40px; text-align: right; }
</style>
